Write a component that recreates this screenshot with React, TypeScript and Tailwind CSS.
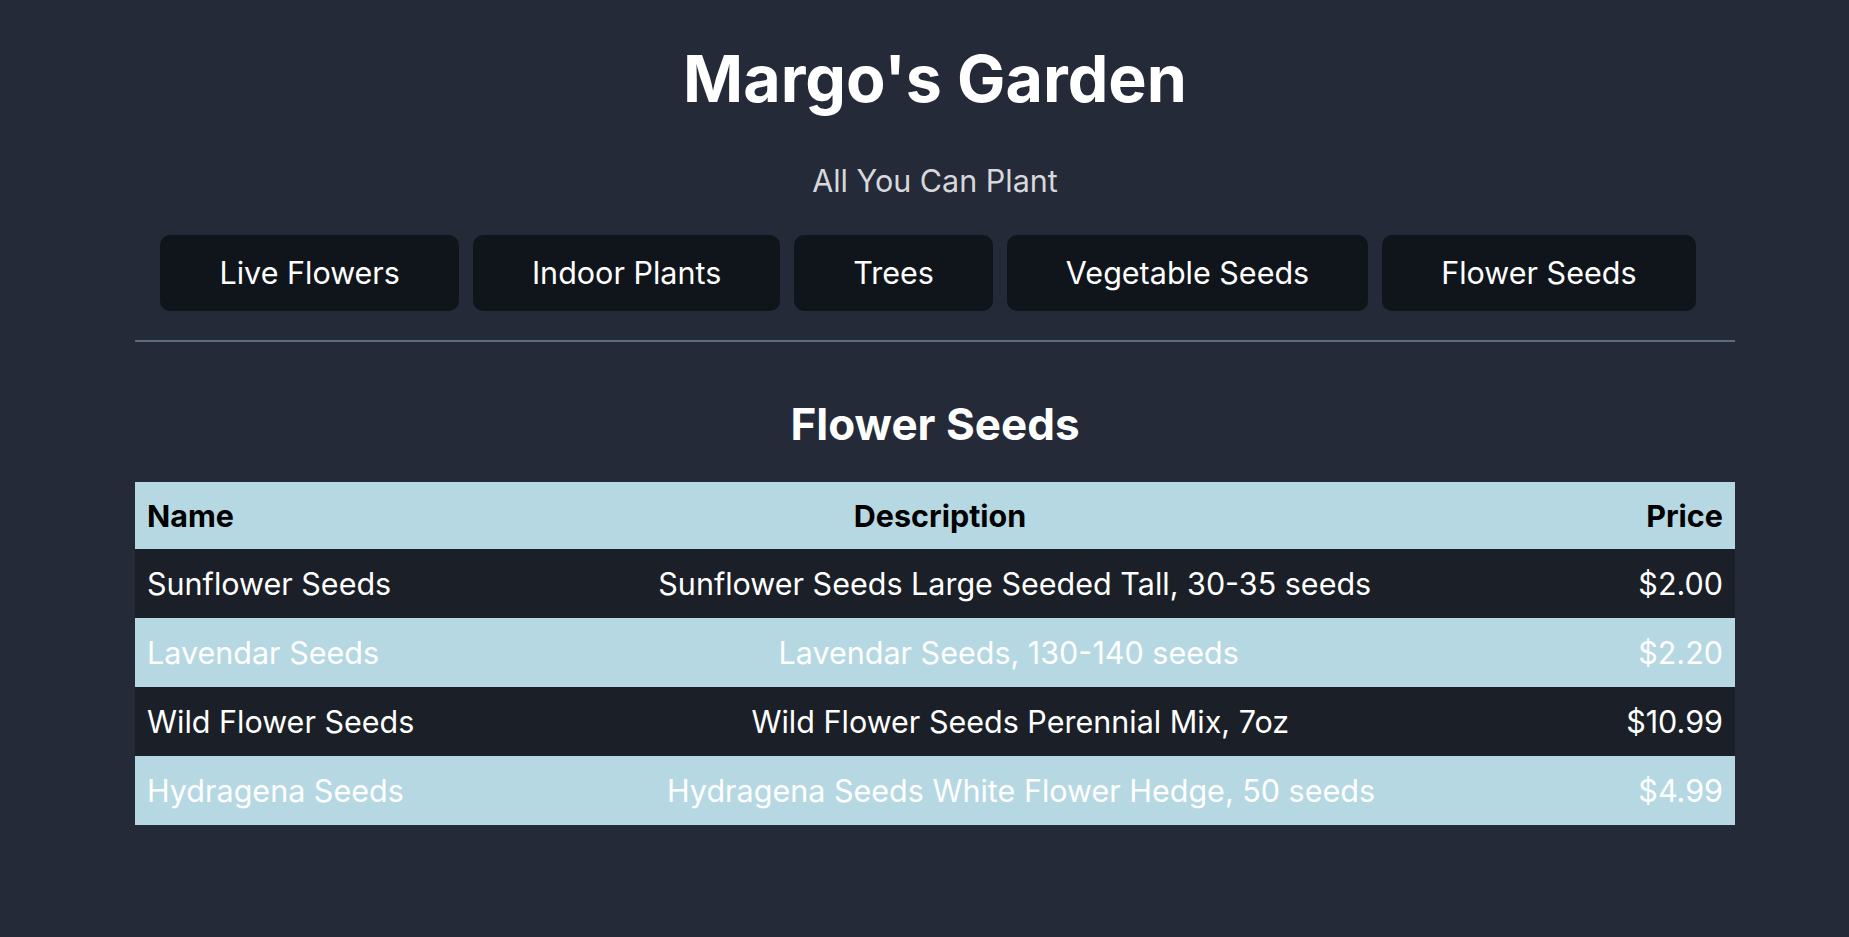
import React from 'react';

const categories = ['Live Flowers', 'Indoor Plants', 'Trees', 'Vegetable Seeds', 'Flower Seeds'];

const products = [
  { name: 'Sunflower Seeds', description: 'Sunflower Seeds Large Seeded Tall, 30-35 seeds', price: '$2.00' },
  { name: 'Lavendar Seeds', description: 'Lavendar Seeds, 130-140 seeds', price: '$2.20' },
  { name: 'Wild Flower Seeds', description: 'Wild Flower Seeds Perennial Mix, 7oz', price: '$10.99' },
  { name: 'Hydragena Seeds', description: 'Hydragena Seeds White Flower Hedge, 50 seeds', price: '$4.99' },
];

export default function App() {
  return (
    <div className="min-h-screen bg-[#242a38] text-white font-['Inter','Liberation_Sans',sans-serif]">
      <div className="ml-[135px] w-[1600px] flex flex-col">
        <h1 className="mt-[41px] text-center text-[64.5px] leading-[76px] font-bold">
          Margo's Garden
        </h1>
        <p className="mt-[44px] text-center text-[30.5px] leading-[40px] text-[#d6d8dc]">All You Can Plant</p>

        <nav className="mt-[34px] flex justify-center gap-[14px] pr-[14px]">
          {categories.map((c) => (
            <button
              key={c}
              className="bg-[#10151b] rounded-[10px] px-[59px] py-[19px] text-[30.5px] leading-[38px] text-white"
            >
              {c}
            </button>
          ))}
        </nav>

        <hr className="mt-[29px] h-[2px] border-0 bg-[#5b6b80]" />

        <h2 className="mt-[54px] text-center text-[44px] leading-[56px] font-bold">Flower Seeds</h2>

        <div className="mt-[30px] text-[30.5px]">
          <div className="h-[67px] flex items-center justify-between px-[12px] bg-[#b5d8e3] text-black font-bold">
            <span>Name</span>
            <span>Description</span>
            <span>Price</span>
          </div>
          {products.map((p, i) => (
            <div
              key={p.name}
              className={`h-[69px] flex items-center justify-between px-[12px] ${
                i % 2 === 0 ? 'bg-[#1b1f27]' : 'bg-[#b5d8e3]'
              }`}
            >
              <span>{p.name}</span>
              <span>{p.description}</span>
              <span>{p.price}</span>
            </div>
          ))}
        </div>
      </div>
    </div>
  );
}
